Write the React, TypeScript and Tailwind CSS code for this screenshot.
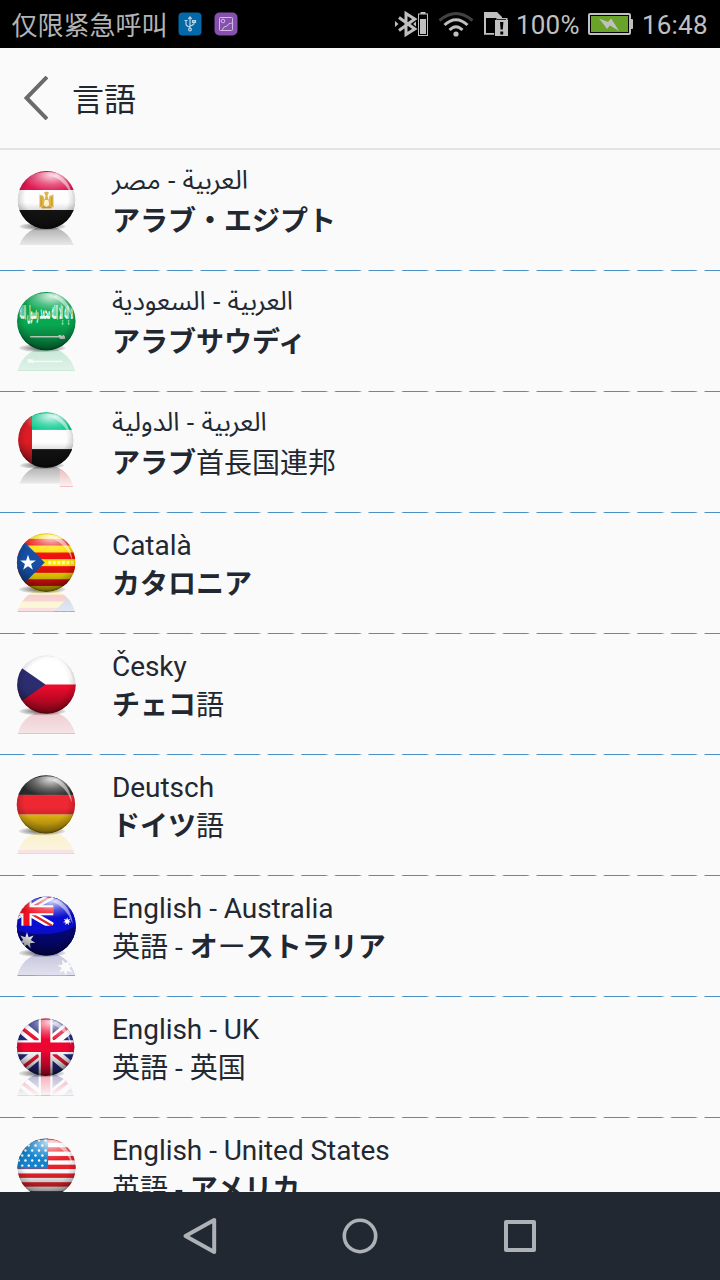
import React, { useId } from "react";

type Lang = {
  native: string;
  rtl?: boolean;
  label: string;
  flag: React.ReactNode;
  mirror?: React.ReactNode;
  cx: number;
  cy: number;
  r: number;
  fadeOut?: boolean;
};

const star = (cx: number, cy: number, outer: number, inner: number, points: number) =>
  Array.from({ length: points * 2 }, (_, i) => {
    const a = (Math.PI * i) / points - Math.PI / 2;
    const d = i % 2 ? inner : outer;
    return `${(cx + d * Math.cos(a)).toFixed(2)},${(cy + d * Math.sin(a)).toFixed(2)}`;
  }).join(" ");

const egyptField = (
  <g>
    <rect x="-30" y="-30" width="60" height="20" fill="#e01650" />
    <rect x="-30" y="-10" width="60" height="20" fill="#fdfdfd" />
    <rect x="-30" y="10" width="60" height="20" fill="#161616" />
  </g>
);

const egypt = (
  <g>
    {egyptField}
    <path d="M-7-5.500l4 1.500 1 4 1-4.500-1.500-3 2.500-1 2.500 1L1-4.500 2 0l1-4 4-1.500v13l-3-1 1 2h-10l1-2-3 1z" fill="#e0b44a" />
    <path d="M-1.800 0h3.600l1 5-2.800 2-2.800-2z" fill="#fff6d4" />
    <path d="M-5.300-3v8M5.300-3v8" stroke="#c58e1c" strokeWidth=".8" />
    <path d="M-5 7.500H5" stroke="#cfa033" strokeWidth="1" />
  </g>
);

const sword = (
  <g>
    <rect x="-16" y="14.600" width="31" height="1.400" fill="#e9fff0" />
    <path d="M12 13.500h2l1 1 2-1 1.500 1.500v2.500h-5z" fill="#e9fff0" />
  </g>
);

const saudiField = <rect x="-30" y="-30" width="60" height="60" fill="#08a851" />;

const saudi = (
  <g>
    {saudiField}
    <g transform="translate(0 -2) scale(.29 1.300)">
      <text
        x="0"
        y="0"
        textAnchor="middle"
        direction="rtl"
        fontSize="15"
        fontWeight="700"
        fill="#f2fff6"
        fontFamily="'Noto Sans Arabic','DejaVu Sans',sans-serif"
      >
        لا إله إلا الله محمد رسول الله
      </text>
    </g>
    {sword}
  </g>
);

const uae = (
  <g>
    <rect x="-30" y="-30" width="60" height="19.500" fill="#00c98b" />
    <rect x="-30" y="-10.500" width="60" height="20" fill="#fdfdfd" />
    <rect x="-30" y="9.500" width="60" height="21" fill="#141414" />
    <rect x="-30" y="-30" width="15.500" height="60" fill="#dc1c24" />
  </g>
);

const catalan = (
  <g>
    <rect x="-30" y="-30" width="60" height="60" fill="#ffe000" />
    {[-23.5, -10, 3.5, 16.5].map((y) => (
      <rect key={y} x="-30" y={y} width="60" height="6.6" fill="#f01010" />
    ))}
    <path d="M2 0h27" stroke="#fff79c" strokeWidth="3.500" strokeDasharray="3 1.500" fill="none" />
    <path d="M-30-29L-1.500 0-30 29z" fill="#164fa6" />
    <polygon points={star(-18, 0.5, 8.2, 3.2, 5)} fill="#fff" />
  </g>
);

const czech = (
  <g>
    <rect x="-30" y="-30" width="60" height="30" fill="#fff" />
    <rect x="-30" y="0" width="60" height="30" fill="#ea0a2c" />
    <path d="M-30-20L-1 0-30 20z" fill="#2c2d70" />
  </g>
);

const german = (
  <g>
    <rect x="-30" y="-30" width="60" height="20.500" fill="#2b2b2b" />
    <rect x="-30" y="-9.500" width="60" height="19.500" fill="#ee2833" />
    <rect x="-30" y="10" width="60" height="20" fill="#fccb14" />
  </g>
);

const australia = (
  <g>
    <rect x="-30" y="-30" width="60" height="60" fill="#0a0ed0" />
    <path d="M-46-30L6 0M6-30L-46 0" stroke="#fff" strokeWidth="7" />
    <path d="M-46-30L6 0M6-30L-46 0" stroke="#e3242f" strokeWidth="2.200" />
    <path d="M-19.500-30V0M-46-15.500H7" stroke="#fff" strokeWidth="10" />
    <path d="M-19.500-30V0M-46-15.500H7" stroke="#f01020" strokeWidth="6" />
    <path d="M7.200-30H30V30H-30V-.2H7.200z" fill="#0a0ed0" />
    <path d="M-30 4Q0 14 30 0V30H-30z" fill="#00002a" opacity=".5" />
    <polygon points={star(-19, 14.5, 8.4, 3.8, 7)} fill="#fff" />
    <polygon points={star(20.5, -4.5, 4.2, 1.9, 7)} fill="#fff" />
  </g>
);

const britain = (
  <g>
    <rect x="-30" y="-30" width="60" height="60" fill="#262a80" />
    <path d="M-30-25L30 25M30-25L-30 25" stroke="#fff" strokeWidth="12" />
    <path d="M-30-24L-7-6M30-26L7-8M-30 26L-7 8M30 24L7 6" stroke="#e61838" strokeWidth="3.600" />
    <path d="M0-30V30M-30 0H30" stroke="#fff" strokeWidth="14" />
    <path d="M0-30V30M-30 0H30" stroke="#ee0632" strokeWidth="9.500" />
  </g>
);

const usa = (
  <g>
    <rect x="-30" y="-30" width="60" height="60" fill="#fdfdfd" />
    {[-29, -20.3, -11.6, -2.9, 5.8, 14.5, 23.2].map((y) => (
      <rect key={y} x="-30" y={y} width="60" height="4.400" fill="#e8222b" />
    ))}
    <rect x="-30" y="-30" width="31.500" height="31" fill="#1583cc" />
    {[-25, -20, -15, -10, -5, 0].flatMap((y, row) =>
      [-26, -19.5, -12.8, -6, 0.5].map((x) => (
        <circle key={`${x}${y}`} cx={x + (row % 2 ? 3.3 : 0) - 1.5} cy={y - 2} r="1.200" fill={x + (row % 2 ? 3.3 : 0) > 1 ? "none" : "#fff"} />
      ))
    )}
  </g>
);

const langs: Lang[] = [
  { native: "العربية - مصر", rtl: true, label: "アラブ・エジプト", flag: egypt, mirror: egyptField, fadeOut: true, cx: 46.5, cy: 50, r: 29 },
  { native: "العربية - السعودية", rtl: true, label: "アラブサウディ", flag: saudi, mirror: <g>{saudiField}{sword}</g>, cx: 46.3, cy: 50.3, r: 29.3 },
  { native: "العربية - الدولية", rtl: true, label: "アラブ首長国連邦", flag: uae, fadeOut: true, cx: 45.9, cy: 48, r: 27.8 },
  { native: "Català", label: "カタロニア", flag: catalan, cx: 46.2, cy: 49.6, r: 29.3 },
  { native: "Česky", label: "チェコ語", flag: czech, mirror: <rect x="-30" y="-30" width="60" height="60" fill="#c8203c" />, cx: 46.5, cy: 50.5, r: 29.3 },
  { native: "Deutsch", label: "ドイツ語", flag: german, cx: 45.9, cy: 49.5, r: 29.2 },
  { native: "English - Australia", label: "英語 - オーストラリア", flag: australia, cx: 46.3, cy: 50, r: 29.5 },
  { native: "English - UK", label: "英語 - 英国", flag: britain, fadeOut: true, cx: 45.6, cy: 50.2, r: 28.7 },
  { native: "English - United States", label: "英語 - アメリカ", flag: usa, cx: 46.6, cy: 49.6, r: 29.2 },
];

function FlagBall({ lang }: { lang: Lang }) {
  const id = useId().replace(/[^a-zA-Z0-9]/g, "");
  return (
    <svg className="h-[120px] w-[112px] shrink-0" viewBox="0 0 112 120">
      <defs>
        <clipPath id={`${id}c`}><circle r="29" /></clipPath>
        <clipPath id={`${id}m`}><rect x="-40" y="0" width="80" height="48.500" /></clipPath>
        <radialGradient id={`${id}s`} cx=".5" cy=".46" r=".56">
          <stop offset=".66" stopColor="#000" stopOpacity="0" />
          <stop offset=".88" stopColor="#000" stopOpacity=".16" />
          <stop offset="1" stopColor="#000" stopOpacity=".62" />
        </radialGradient>
        <linearGradient id={`${id}b`} x1="0" y1="0" x2="0" y2="1">
          <stop offset=".55" stopColor="#000" stopOpacity="0" />
          <stop offset="1" stopColor="#000" stopOpacity=".45" />
        </linearGradient>
        <radialGradient id={`${id}g`} cx=".58" cy=".1" r=".62">
          <stop offset="0" stopColor="#fff" stopOpacity=".85" />
          <stop offset=".55" stopColor="#fff" stopOpacity=".3" />
          <stop offset="1" stopColor="#fff" stopOpacity="0" />
        </radialGradient>
        <radialGradient id={`${id}d`}>
          <stop offset=".3" stopColor="#000" stopOpacity=".5" />
          <stop offset="1" stopColor="#000" stopOpacity=".08" />
        </radialGradient>
        <linearGradient id={`${id}f`} x1="0" y1="26" x2="0" y2="49" gradientUnits="userSpaceOnUse">
          <stop offset="0" stopColor="#fafafa" stopOpacity={lang.fadeOut ? 0.65 : 0.78} />
          <stop offset="1" stopColor="#fafafa" stopOpacity={lang.fadeOut ? 0.98 : 0.9} />
        </linearGradient>
      </defs>
      <g transform={`translate(${lang.cx} ${lang.cy}) scale(${lang.r / 29})`}>
        <g clipPath={`url(#${id}m)`}>
          <g transform="translate(0 55) rotate(180)">
            <g clipPath={`url(#${id}c)`}>{lang.mirror ?? lang.flag}</g>
          </g>
          <rect x="-32" y="24" width="64" height="26" fill={`url(#${id}f)`} />
        </g>
        <ellipse cx="-4" cy="26.500" rx="23" ry="4" fill={`url(#${id}d)`} />
        <g clipPath={`url(#${id}c)`}>
          {lang.flag}
          <circle r="29" fill={`url(#${id}b)`} />
          <circle r="29" fill={`url(#${id}s)`} />
          <ellipse cx="1" cy="-14" rx="25" ry="14" fill={`url(#${id}g)`} />
          <path d="M10-26Q24-20 26-2Q20-18 6-24z" fill="#fff" opacity=".5" />
        </g>
      </g>
    </svg>
  );
}

function Label({ text }: { text: string }) {
  return (
    <>
      {text.split(/([ァ-ヺ・]+)/).map((part, i) =>
        i % 2 ? <b key={i} className="font-bold">{part}</b> : part
      )}
    </>
  );
}

function StatusBar() {
  return (
    <div className="flex h-12 shrink-0 items-center bg-black pl-[11.5px] text-[26px] leading-[48px] text-[#b4b4b4]">
      <span className="w-[166.5px] whitespace-nowrap font-['Noto_Sans_CJK_SC',sans-serif]">仅限紧急呼叫</span>
      <svg className="h-6 w-6 shrink-0" viewBox="0 0 24 24" fill="none">
        <rect x=".5" y=".5" width="23" height="23" rx="4" fill="#0568a8" />
        <g stroke="#b9d4e2" strokeWidth="1.200">
          <path d="M12 6v11M8 9v3q0 2 4 3M16 9v2q0 2-4 3" />
          <circle cx="12" cy="17.500" r="1.400" />
          <path d="M10.300 7L12 5l1.700 2M6.500 8.500h3M14.500 8.500h3v2h-3z" />
        </g>
      </svg>
      <svg className="ml-3 h-6 w-6 shrink-0" viewBox="0 0 24 24" fill="none">
        <rect x=".5" y=".5" width="23" height="23" rx="5" fill="#8550ae" />
        <g stroke="#d2bce0" strokeWidth="1">
          <rect x="5.500" y="5.500" width="13" height="13" rx=".8" />
          <circle cx="9" cy="9" r="1.800" />
          <path d="M18 11q-4 0-5 3l-3 1-2 3.500" />
        </g>
      </svg>
      <div className="flex-1" />
      <svg className="h-12 w-[122px] shrink-0" viewBox="394 0 122 48" fill="none">
        <path d="M399 17.500l15.800 11.500-8.800 5.500V13.500l8.800 5.500L399 30.500" stroke="#c0c0c0" strokeWidth="3" />
        <path d="M395 21l3.500 3-3.500 3zM416 21.500l-3 2.500 3 2.500z" fill="#c0c0c0" />
        <path d="M420.500 12h5v1.500h2.500v22.500h-10v-22.500h2.500z" fill="#c0c0c0" />
        <path d="M419 14.500h8v20.500h-8z" fill="#000" />
        <path d="M420 19h6v15h-6z" fill="#c0c0c0" />
        <path d="M439.500 20.500Q456 6.500 472.500 20.500" stroke="#424242" strokeWidth="3" />
        <path d="M444.500 25Q456 14.500 467.500 25M449.500 30Q456 23.500 462.500 30" stroke="#c0c0c0" strokeWidth="3" />
        <circle cx="456" cy="34" r="2.600" fill="#c0c0c0" />
        <path d="M484 12h13l5 5v17.700h-18z" fill="#c0c0c0" />
        <path d="M486 18h13v15h-13z" fill="#000" />
        <path d="M495 20h1.500v-2h11v2h.5v16h-13z" fill="#c0c0c0" />
        <path d="M494.500 20v15M497 19.500h9" stroke="#000" strokeWidth=".8" />
        <path d="M500 22h3.400l-.6 7.500h-2.200zM500.300 31.500h2.900v3h-2.900z" fill="#000" />
      </svg>
      <span className="w-[72px] pt-[2px] font-['Roboto',sans-serif] tracking-[0.2px] text-[#c0c0c0]">100%</span>
      <svg className="h-6 w-[46px] shrink-0" viewBox="0 0 46 24">
        <rect x="1" y="2" width="41" height="20" rx="1" fill="#000" stroke="#c0c0c0" strokeWidth="2" />
        <rect x="42" y="7" width="3" height="10" rx=".8" fill="#c0c0c0" />
        <rect x="3" y="4" width="37" height="16" fill="#6aa329" />
        <path d="M11 6.500l9 3.500 3-3.500 4 6 4 6.500-9-5.500-3 3.500-4-5.500z" fill="#c0c0c0" />
      </svg>
      <span className="ml-2 w-[78px] pt-[2px] font-['Roboto',sans-serif] tracking-[0.2px] text-[#c0c0c0]">16:48</span>
    </div>
  );
}

export default function App() {
  return (
    <div className="flex h-[1280px] w-[720px] flex-col overflow-hidden bg-[#fafafa] text-[#222831]">
      <StatusBar />
      <header className="flex h-[102px] shrink-0 items-center border-b-2 border-[#e4e4e4] pl-6">
        <svg className="h-11 w-6" viewBox="0 0 24 44" fill="none">
          <path d="M23 1L2.500 22 23 43" stroke="#6a6a6a" strokeWidth="4" />
        </svg>
        <h1 className="ml-6 pt-1 font-['Roboto','Noto_Sans_CJK_JP',sans-serif] text-[32px] leading-[48px]">言語</h1>
      </header>
      <main className="min-h-0 flex-1 overflow-hidden">
        {langs.map((lang) => (
          <div key={lang.native} className="flex h-[121px] flex-col">
            <div className="flex h-[120px]">
              <FlagBall lang={lang} />
              <div className="pt-[14px] font-['Roboto','Noto_Sans_CJK_JP',sans-serif] text-[28px] leading-[38px] whitespace-nowrap">
                {lang.rtl ? (
                  <div dir="rtl" className="h-[39px] w-fit pt-px font-['Noto_Sans_Arabic','Noto_Sans','DejaVu_Sans',sans-serif] text-[26px] leading-[32px]">
                    {lang.native}
                  </div>
                ) : (
                  <div className="h-[39px] tracking-[-0.05px]">{lang.native}</div>
                )}
                <div><Label text={lang.label} /></div>
              </div>
            </div>
            <div className="h-px bg-[repeating-linear-gradient(90deg,#4a90c4_0px,#4a90c4_23px,#fafafa_26.500px,#fafafa_31.500px,#4a90c4_33.600px)]" />
          </div>
        ))}
      </main>
      <nav className="flex h-[88px] shrink-0 items-center justify-center gap-[120px] bg-[#222831]">
        <svg className="h-10 w-10" viewBox="0 0 40 40" fill="none">
          <path d="M34.200 4v32L5.500 20z" stroke="#aeb1b5" strokeWidth="4" strokeLinejoin="round" />
        </svg>
        <svg className="h-10 w-10" viewBox="0 0 40 40" fill="none">
          <circle cx="20" cy="20" r="15.700" stroke="#aeb1b5" strokeWidth="3.600" />
        </svg>
        <svg className="h-10 w-10" viewBox="0 0 40 40" fill="none">
          <rect x="6" y="6" width="28" height="28" stroke="#aeb1b5" strokeWidth="4" strokeLinejoin="round" />
        </svg>
      </nav>
    </div>
  );
}
